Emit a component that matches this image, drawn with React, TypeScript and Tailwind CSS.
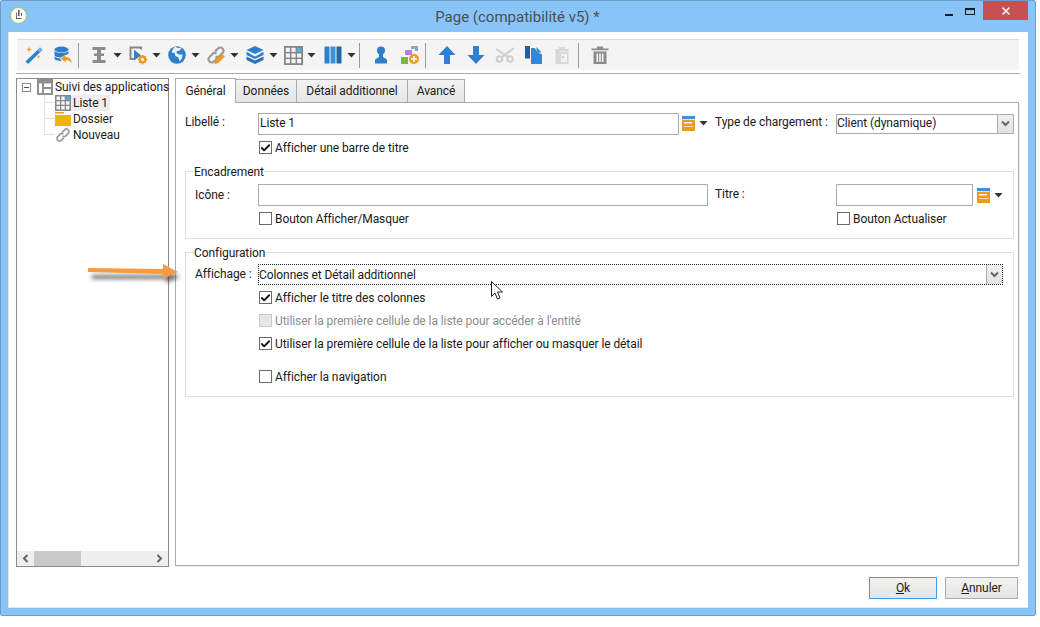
import React from 'react';
import { Check, X } from 'lucide-react';

const Caret = () => (
  <svg width="9" height="5" viewBox="0 0 9 5" className="shrink-0" aria-hidden="true">
    <path d="M0.500 0h8L4.500 4.500z" fill="#333" />
  </svg>
);

const Chevron = ({ dir = 'down' }: { dir?: 'down' | 'left' | 'right' }) => (
  <svg width="9" height="9" viewBox="0 0 9 9" aria-hidden="true">
    {dir === 'down' && <path d="M1 2.500l3.500 3.500L8 2.500" fill="none" stroke="#666" strokeWidth="2" />}
    {dir === 'left' && <path d="M6.500 1L3 4.500 6.500 8" fill="none" stroke="#666" strokeWidth="2" />}
    {dir === 'right' && <path d="M2.500 1L6 4.500 2.500 8" fill="none" stroke="#666" strokeWidth="2" />}
  </svg>
);

const Svg = ({ size = 20, children }: { size?: number; children: React.ReactNode }) => (
  <svg width={size} height={size} viewBox="0 0 20 20" className="shrink-0" aria-hidden="true">
    {children}
  </svg>
);

const WandIcon = () => (
  <Svg>
    <path d="M1.500 16.500l2.500 2.500L18.500 5 16 2.500z" fill="#2f80d0" />
    <path d="M13.500 5L16 2.500 18.500 5 16 7.500z" fill="#6fb4ea" />
    <path d="M5 1.500l.8 2.200 2.200.8-2.200.8L5 7.500l-.8-2.200-2.200-.8 2.200-.8zM14.500 10l.6 1.400 1.400.6-1.400.6-.6 1.400-.6-1.400-1.400-.6 1.400-.6z" fill="#f0a020" />
  </Svg>
);

const DbIcon = () => (
  <Svg>
    <ellipse cx="8.500" cy="4.500" rx="7" ry="3" fill="#2f7fc8" />
    <path d="M1.500 6c1.500 2.600 12.500 2.600 14 0v2.500c-1 1-3 1.500-4 1.700L8 12.500c-3.500 0-6.500-1-6.500-2.500z" fill="#2f7fc8" />
    <path d="M1.500 11.500c1.500 1.200 3.500 1.700 5.500 1.800l1.500 2.700c-3.500 0-7-1-7-2.500z" fill="#2f7fc8" />
    <path d="M8 13.500l4.500-4v2.500c3.500 0 6 2 6 6.500-1-2.500-3-3.500-6-3.500V17.500z" fill="#ef9a1e" />
  </Svg>
);

const BeamIcon = () => (
  <Svg>
    <path d="M3.500 2h13v3H12v3.500h3v2.500h-3v4h4.500v3h-13v-3H8v-4H5V8.500h3V5H3.500z" fill="#8c8c8c" />
  </Svg>
);

const PlayGearIcon = () => (
  <Svg>
    <path d="M1.500 1.500H14v3h-2V3.500H3.500V13H6v2H1.500z" fill="#858585" />
    <path d="M6 4.500l7 6-7 5z" fill="#2f80d0" />
    <circle cx="14.500" cy="14.500" r="2.800" fill="none" stroke="#ef9a1e" strokeWidth="2.200" />
    <path d="M14.500 10v2M14.500 17v2.500M10 14.500h2M17 14.500h2.500M11.300 11.300l1 1M16.700 16.700l1 1M17.700 11.300l-1 1M12.300 16.700l-1 1" stroke="#ef9a1e" strokeWidth="1.400" />
  </Svg>
);

const GlobeIcon = () => (
  <Svg>
    <circle cx="10" cy="10" r="8.800" fill="#2f7fc8" />
    <path d="M8 1.500l3 1.500 3.500-.5-1.500 3-3 .5-.5 2 2.500 1.500 3.500 0-.5 4-2.500 3-1-4-3-1.500-1-3-3-.5 1.500-3.500z" fill="#e8f2fb" />
  </Svg>
);

const LinkIcon = ({ pencil = false, size = 20 }: { pencil?: boolean; size?: number }) => (
  <Svg size={size}>
    <path
      d="M9 6.500l3-3a3 3 0 0 1 4.500 0 3 3 0 0 1 0 4.500l-3 3a3 3 0 0 1-4 .3M11 13.500l-3 3a3 3 0 0 1-4.500 0 3 3 0 0 1 0-4.500l3-3a3 3 0 0 1 4-.3"
      fill="none"
      stroke="#9a9a9a"
      strokeWidth="2.200"
    />
    {pencil && <path d="M8.500 19l.7-3.500 6.800-6.800 2.800 2.800-6.800 6.800z" fill="#ef9a1e" />}
  </Svg>
);

const BoxIcon = () => (
  <Svg>
    <path d="M10 1l8.500 4-8.500 4-8.500-4z" fill="#2f7fc8" />
    <path d="M1.500 6.800L5 8.500v.5l5 2.500 5-2.500v-.5l3.500-1.700V10L10 14 1.500 10z" fill="#2f7fc8" />
    <path d="M1.500 11.500L10 15.500l8.500-4V15L10 19l-8.500-4z" fill="#2773bd" />
  </Svg>
);

const GridIcon = ({ size = 20 }: { size?: number }) => (
  <svg width={size} height={size} viewBox="0 0 16 16" className="shrink-0" aria-hidden="true">
    <rect width="16" height="16" fill="#858585" />
    {[1.500, 6.250, 11].map((y) =>
      [1.500, 6.250, 11].map((x) => (
        <rect key={`${x}-${y}`} x={x} y={y} width="3.500" height="3.500" fill={x === 11 && y === 1.500 ? '#4fb0e8' : '#f4f4f4'} />
      )),
    )}
  </svg>
);

const ColumnsIcon = () => (
  <Svg>
    <rect x="1.500" y="1.500" width="5" height="17" fill="#2f7fc8" />
    <rect x="7.500" y="1.500" width="5" height="17" fill="#3f92da" />
    <rect x="13.500" y="1.500" width="5" height="17" fill="#2467a8" />
  </Svg>
);

const PersonIcon = () => (
  <Svg>
    <circle cx="10" cy="5.500" r="4" fill="#2f7fc8" />
    <path d="M8 8.500h4v3.500l4 2.500V18.500H4V14.500l4-2.500z" fill="#2f7fc8" />
  </Svg>
);

const ShapesIcon = () => (
  <Svg>
    <rect x="5" y="5" width="7" height="5" fill="#b77fd8" />
    <path d="M11 1h7v5h-3V4h-4z" fill="#8aa8c8" />
    <rect x="1" y="12" width="7" height="7" fill="#7cb83e" />
    <circle cx="14" cy="14" r="5" fill="#ef9a1e" />
    <path d="M14 11v6M11 14h6" stroke="#fff" strokeWidth="1.600" />
  </Svg>
);

const UpIcon = () => (
  <Svg>
    <path d="M10 1L18.500 10H13v9H7v-9H1.500z" fill="#2f80d0" />
  </Svg>
);

const DownIcon = () => (
  <Svg>
    <path d="M10 19L18.500 10H13V1H7v9H1.500z" fill="#2f80d0" />
  </Svg>
);

const ScissorsIcon = () => (
  <Svg>
    <path d="M1 4l12 8M19 3L7 12" stroke="#cfcfcf" strokeWidth="2" fill="none" />
    <circle cx="15" cy="14" r="2.800" fill="none" stroke="#cfcfcf" strokeWidth="2" />
    <circle cx="4.500" cy="14" r="2.800" fill="none" stroke="#cfcfcf" strokeWidth="2" />
  </Svg>
);

const CopyIcon = () => (
  <Svg>
    <path d="M1 1h5v12.500H1z" fill="#1f5fa3" />
    <path d="M7 3h4l1.500 3.500L18 9.500V19H7z" fill="#3187d6" />
    <path d="M12.500 2l5 5.500h-5z" fill="#3187d6" />
  </Svg>
);

const PasteIcon = () => (
  <Svg>
    <path d="M2.500 4H6V2h6v2h3.500v15H2.500z" fill="#d8d8d8" />
    <path d="M7 6h7v.5H7z" fill="#f4f4f4" />
    <path d="M8 9h6v8H8z" fill="#f2f2f2" />
    <path d="M9 11h2v2H9z" fill="#cfcfcf" />
  </Svg>
);

const TrashIcon = () => (
  <Svg>
    <path d="M7 1.500h6v2h5.500v1.800h-17V3.500H7z" fill="#8a8a8a" />
    <path d="M3.500 6.500h13V19h-13zM6.500 8.500v8.500h1.600V8.500zM9.200 8.500v8.500h1.600V8.500zM11.900 8.500v8.500h1.600V8.500z" fill="#8a8a8a" fillRule="evenodd" />
  </Svg>
);

const FolderIcon = () => (
  <svg width="16" height="14" viewBox="0 0 16 14" className="shrink-0" aria-hidden="true">
    <rect width="9" height="1.500" fill="#ef9a1e" />
    <rect y="3" width="16" height="11" fill="#f0b400" />
  </svg>
);

const LayoutIcon = () => (
  <svg width="16" height="16" viewBox="0 0 16 16" className="shrink-0" aria-hidden="true">
    <path d="M0 0h16v16H0zM2 4.500v9.500h3V4.500zM7 4.500v3.500h7V4.500zM7 10v4h7v-4z" fill="#8f8f8f" fillRule="evenodd" />
  </svg>
);

const PickerIcon = () => (
  <svg width="13" height="15" viewBox="0 0 13 15" className="shrink-0" aria-hidden="true">
    <rect width="13" height="3" fill="#3f8fdc" />
    <rect y="3" width="13" height="1" fill="#dfdfdf" />
    <rect y="4" width="13" height="11" fill="#ef9a1e" />
    <rect x="2" y="6" width="8" height="1.500" fill="#fff" />
    <rect x="2" y="10" width="9" height="1" fill="#fde0a8" />
  </svg>
);

const ToolButton = ({ children, caret = false }: { children: React.ReactNode; caret?: boolean }) =>
  caret ? (
    <div className="w-[39px] h-full flex items-center shrink-0 pl-[5px] gap-[4px]">
      {children}
      <Caret />
    </div>
  ) : (
    <div className="w-[29px] h-full flex items-center justify-center shrink-0">{children}</div>
  );

const ToolSep = ({ className = '' }: { className?: string }) => (
  <div className={`w-px h-[25px] bg-[#9a9a9a] shrink-0 ${className}`} />
);

const CheckRow = ({
  label,
  checked = false,
  disabled = false,
  className = '',
}: {
  label: string;
  checked?: boolean;
  disabled?: boolean;
  className?: string;
}) => (
  <div className={`flex items-center gap-[3px] h-[15px] ${className}`}>
    <div
      className={`w-[13px] h-[13px] border flex items-center justify-center shrink-0 ${
        disabled ? 'border-[#c8c8c8] bg-[#e6e6e6]' : 'border-[#6a6a6a] bg-white'
      }`}
    >
      {checked && <Check size={12} strokeWidth={4} className="text-[#111]" />}
    </div>
    <span className={`whitespace-nowrap ${disabled ? 'text-[#8c8c8c]' : 'text-[#1a1a1a]'}`}>{label}</span>
  </div>
);

const SelectArrow = () => (
  <div className="w-[16px] h-full bg-gradient-to-b from-[#f0f0f0] to-[#e2e2e2] border-l border-[#ababab] flex items-center justify-center shrink-0">
    <Chevron />
  </div>
);

const TreeRow = ({
  icon,
  label,
  selected = false,
  last = false,
}: {
  icon: React.ReactNode;
  label: string;
  selected?: boolean;
  last?: boolean;
}) => (
  <div className="flex items-center h-[16px]">
    <div className={`w-[11px] h-full shrink-0 ${last ? '' : 'border-l border-[#dedede]'}`}>
      <div className={`h-[8px] border-b border-[#dedede] ${last ? 'border-l' : ''}`} />
    </div>
    <div className={`flex items-center h-full pr-[2px] ${selected ? 'bg-[#eeeeee]' : ''}`}>
      <div className="w-[18px] flex justify-start shrink-0">{icon}</div>
      <span className="whitespace-nowrap">{label}</span>
    </div>
  </div>
);

const Tab = ({ label, width, active = false }: { label: string; width: string; active?: boolean }) => (
  <div
    className={`${width} flex items-center justify-center border-t border-r border-[#ababab] ${
      active
        ? 'h-[25px] -mb-px bg-white border-l z-10 relative'
        : 'h-[23px] bg-gradient-to-b from-[#f2f2f2] to-[#e5e5e5]'
    }`}
  >
    {label}
  </div>
);

export default function App() {
  return (
    <div className="w-[1040px] h-[627px] bg-white font-['Roboto',sans-serif] text-[12px] tracking-[-0.08px] text-[#1a1a1a] relative overflow-hidden">
      {/* Window frame */}
      <div className="w-[1036px] h-[616px] bg-[#89c4f9] border border-[#6f9bc9] rounded-[2px] flex flex-col">
        {/* Title bar */}
        <div className="h-[30px] flex items-start shrink-0 relative">
          <div className="w-[17px] h-[17px] rounded-full bg-white border border-[#9cc45a] ml-[9px] mt-[6px] flex items-center justify-center shrink-0">
            <svg width="9" height="11" viewBox="0 0 9 11" aria-hidden="true">
              <path d="M4 0h1.500v6H4zM1 2.500h1v6.500h5.500V8H2.800V2.500zM7 3h1v3H7z" fill="#555" />
            </svg>
          </div>
          <div className="flex-1 text-center text-[15px] tracking-normal leading-[30px] text-[#4c4f52] pl-[70px] pt-px">
            Page (compatibilité v5) *
          </div>
          <div className="w-[21px] h-[3px] flex items-center justify-center mt-[12px] shrink-0">
            <div className="w-[8px] h-[2px] bg-[#1a1a1a]" />
          </div>
          <div className="w-[10px] h-[7px] border border-[#1a1a1a] border-t-2 ml-[6px] mt-[7px] shrink-0" />
          <div className="w-[45px] h-[19px] bg-[#c75050] flex items-center justify-center ml-[8px] mr-[7px] shrink-0">
            <X size={12} strokeWidth={3} className="text-white" />
          </div>
        </div>

        {/* Client area */}
        <div className="flex-1 mx-[7px] mb-[7px] mt-px bg-white border-l border-b border-[#e6e6e6] pl-[7px] pr-[8px] pt-[7px] flex flex-col min-h-0">
          {/* Toolbar */}
          <div className="h-[31px] bg-[#f4f4f4] border-t border-[#dcdcdc] flex items-center pl-[2px] shrink-0 mr-px ml-px">
            <ToolButton><WandIcon /></ToolButton>
            <ToolButton><DbIcon /></ToolButton>
            <ToolSep className="ml-px" />
            <div className="w-[5px] shrink-0" />
            <ToolButton caret><BeamIcon /></ToolButton>
            <ToolButton caret><PlayGearIcon /></ToolButton>
            <ToolButton caret><GlobeIcon /></ToolButton>
            <ToolButton caret><LinkIcon pencil /></ToolButton>
            <ToolButton caret><BoxIcon /></ToolButton>
            <ToolButton caret><GridIcon size={19} /></ToolButton>
            <ToolButton caret><ColumnsIcon /></ToolButton>
            <ToolSep className="ml-[2px]" />
            <div className="w-[6px] shrink-0" />
            <ToolButton><PersonIcon /></ToolButton>
            <ToolButton><ShapesIcon /></ToolButton>
            <ToolSep className="ml-px" />
            <div className="w-[6px] shrink-0" />
            <ToolButton><UpIcon /></ToolButton>
            <ToolButton><DownIcon /></ToolButton>
            <ToolButton><ScissorsIcon /></ToolButton>
            <ToolButton><CopyIcon /></ToolButton>
            <ToolButton><PasteIcon /></ToolButton>
            <ToolSep className="ml-px" />
            <div className="w-[6px] shrink-0" />
            <ToolButton><TrashIcon /></ToolButton>
          </div>
          <div className="h-px bg-[#ababab] mt-[3px] shrink-0" />

          {/* Main row */}
          <div className="flex mt-[4px] h-[489px] shrink-0">
            {/* Tree */}
            <div className="w-[153px] h-full border border-[#868b92] flex flex-col shrink-0">
              <div className="flex-1 pt-0 min-h-0">
                <div className="flex items-center h-[16px] pl-[5px]">
                  <div className="w-[9px] h-[9px] border border-[#8a8a8a] flex items-center justify-center shrink-0">
                    <div className="w-[5px] h-px bg-[#555]" />
                  </div>
                  <div className="ml-[6px] mr-[2px]"><LayoutIcon /></div>
                  <span className="whitespace-nowrap">Suivi des applications</span>
                </div>
                <div className="ml-[27px]">
                  <TreeRow icon={<GridIcon size={16} />} label="Liste 1" selected />
                  <TreeRow icon={<FolderIcon />} label="Dossier" />
                  <TreeRow icon={<LinkIcon size={16} />} label="Nouveau" last />
                </div>
              </div>
              <div className="h-[15px] bg-[#eeeeee] flex items-center shrink-0">
                <div className="w-[17px] flex justify-center shrink-0"><Chevron dir="left" /></div>
                <div className="w-[47px] h-full bg-[#c9c9c9] shrink-0" />
                <div className="flex-1" />
                <div className="w-[17px] flex justify-center shrink-0"><Chevron dir="right" /></div>
              </div>
            </div>

            {/* Tabbed panel */}
            <div className="w-[844px] ml-[6px] flex flex-col h-[488px] shrink-0">
              <div className="flex items-end h-[24px] shrink-0">
                <Tab label="Général" width="w-[61px]" active />
                <Tab label="Données" width="w-[61px]" />
                <Tab label="Détail additionnel" width="w-[111px]" />
                <Tab label="Avancé" width="w-[57px]" />
              </div>
              <div className="flex-1 border border-[#ababab] shadow-[1px_1px_0_#eeeeee] pl-[9px] pr-[4px] pt-[10px]">
                {/* Libellé row */}
                <div className="flex items-center h-[21px]">
                  <span className="w-[73px] shrink-0 pb-[3px]">Libellé :</span>
                  <div className="w-[421px] h-[22px] border border-[#ababab] pl-[1px] pb-px flex items-center shrink-0">Liste 1</div>
                  <div className="ml-[3px] flex items-center gap-[4px] w-[33px] shrink-0">
                    <PickerIcon />
                    <Caret />
                  </div>
                  <span className="w-[121px] shrink-0 whitespace-nowrap pb-[3px]">Type de chargement :</span>
                  <div className="w-[178px] h-[20px] border border-[#ababab] flex items-center shrink-0">
                    <span className="flex-1 pb-px">Client (dynamique)</span>
                    <SelectArrow />
                  </div>
                </div>
                <CheckRow label="Afficher une barre de titre" checked className="ml-[74px] mt-[6px]" />

                {/* Encadrement */}
                <div className="mt-[16px] h-[68px] w-[829px] border border-[#dddddd] pl-[8px]">
                  <div className="-mt-[7px] h-[15px] w-fit bg-white leading-[15px]">Encadrement</div>
                  <div className="flex items-center h-[22px] mt-[4px] ml-px">
                    <span className="w-[63px] shrink-0">Icône :</span>
                    <div className="w-[450px] h-[22px] border border-[#ababab] shrink-0" />
                    <span className="w-[121px] ml-[7px] shrink-0 pb-[3px]">Titre :</span>
                    <div className="w-[137px] h-[22px] border border-[#ababab] shrink-0" />
                    <div className="ml-[4px] flex items-center gap-[4px] shrink-0">
                      <PickerIcon />
                      <Caret />
                    </div>
                  </div>
                  <div className="flex mt-[5px] ml-px">
                    <CheckRow label="Bouton Afficher/Masquer" className="ml-[64px] w-[578px] shrink-0" />
                    <CheckRow label="Bouton Actualiser" />
                  </div>
                </div>

                {/* Configuration */}
                <div className="mt-[13px] h-[145px] w-[829px] border border-[#dddddd] pl-[8px]">
                  <div className="-mt-[7px] h-[15px] w-fit bg-white leading-[15px]">Configuration</div>
                  <div className="flex items-center h-[21px] mt-[3px] ml-px">
                    <span className="w-[63px] shrink-0 pb-px">Affichage :</span>
                    <div className="w-[745px] h-[21px] border border-dotted border-[#222] flex items-center shrink-0">
                      <span className="flex-1">Colonnes et Détail additionnel</span>
                      <SelectArrow />
                    </div>
                  </div>
                  <CheckRow label="Afficher le titre des colonnes" checked className="ml-[65px] mt-[5px]" />
                  <CheckRow label="Utiliser la première cellule de la liste pour accéder à l'entité" disabled className="ml-[65px] mt-[8px]" />
                  <CheckRow label="Utiliser la première cellule de la liste pour afficher ou masquer le détail" checked className="ml-[65px] mt-[8px]" />
                  <CheckRow label="Afficher la navigation" className="ml-[65px] mt-[18px]" />
                </div>
              </div>
            </div>
          </div>

          {/* Footer */}
          <div className="flex justify-end gap-[8px] mt-[10px] pr-[2px]">
            <div className="w-[68px] h-[22px] border border-[#3d9bf0] bg-gradient-to-b from-[#f2f2f2] to-[#e5e5e5] flex items-center justify-center">
              <span><span className="underline">O</span>k</span>
            </div>
            <div className="w-[73px] h-[22px] border border-[#adadad] bg-gradient-to-b from-[#f2f2f2] to-[#e5e5e5] flex items-center justify-center">
              <span><span className="underline">A</span>nnuler</span>
            </div>
          </div>
        </div>
      </div>

      {/* Annotation arrow drawn over the dialog */}
      <svg className="absolute left-[80px] top-[255px]" width="110" height="40" viewBox="0 0 110 40" aria-hidden="true">
        <defs>
          <filter id="arrow-blur" x="-20%" y="-100%" width="140%" height="300%">
            <feGaussianBlur stdDeviation="2" />
          </filter>
        </defs>
        <path d="M12 20h74v-4l14 6-14 6v-4H12z" fill="#444" opacity="0.75" filter="url(#arrow-blur)" />
        <path d="M8 13l75 1V9l15 8-15 7v-5l-75-2z" fill="#f79a45" />
      </svg>

      {/* Mouse cursor */}
      <svg className="absolute left-[491px] top-[281px]" width="13" height="20" viewBox="0 0 13 20" aria-hidden="true">
        <path d="M.5.500v15l3.500-3.500 2.500 6 2.500-1-2.500-6h5z" fill="#fff" stroke="#222" strokeWidth="1" />
      </svg>
    </div>
  );
}
